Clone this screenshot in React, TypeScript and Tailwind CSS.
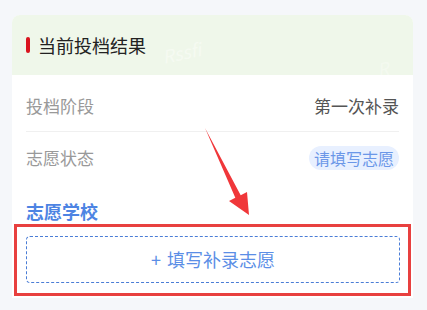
export default function App() {
  return (
    <div
      className="relative w-[427px] h-[310px] overflow-hidden bg-[#f5f7fa] pt-[15px] px-[12px]"
      style={{ fontFamily: '"Noto Sans CJK SC", "Noto Sans", sans-serif' }}
    >
      <div className="w-[401px] h-[283px] bg-white rounded-t-[8px] overflow-hidden">
        {/* header */}
        <div className="relative h-[60px] bg-[#eff7ea] flex items-center px-[14px] gap-[8px]">
          <span className="w-[4px] h-[16px] rounded-[2px] bg-[#d9141e]" />
          <span className="text-[18px] leading-none text-[#222]">当前投档结果</span>
          <span className="absolute left-[150px] top-[24px] text-[18px] italic text-white/40 -rotate-12">Rssfi</span>
          <span className="absolute left-[365px] top-[40px] text-[18px] italic text-white/30 -rotate-12">R</span>
        </div>

        <div className="px-[14px] pt-[5px]">
          <div className="h-[52px] flex items-center justify-between border-b border-[#f0f0f0]">
            <span className="text-[17px] text-[#999]">投档阶段</span>
            <span className="text-[17px] text-[#555]">第一次补录</span>
          </div>
          <div className="h-[52px] flex items-center justify-between">
            <span className="text-[17px] text-[#999]">志愿状态</span>
            <span className="h-[24px] px-[5px] rounded-full bg-[#e8f0ff] text-[16px] leading-[24px] text-[#6b97e8]">
              请填写志愿
            </span>
          </div>
          <div className="h-[40px] flex items-end">
            <span className="text-[18px] leading-[26px] font-bold text-[#4d84e3]">志愿学校</span>
          </div>
        </div>

        <div className="mx-[2px] border-[3px] border-[#e8403f] pl-[9px] pr-[8px] pt-[9px] pb-[10px]">
          <div className="h-[47px] rounded-[4px] border border-dashed border-[#4a7dd6] flex items-center justify-center gap-[6px] text-[18px] text-[#5b8ee6]">
            <span>+</span>
            <span>填写补录志愿</span>
          </div>
        </div>
      </div>

      <svg className="absolute left-0 top-0" width="427" height="310" viewBox="0 0 427 310">
        <polygon
          points="205,128 240.7,195.2 247,192 249,215 229,201 235.3,197.8"
          fill="#f0373a"
        />
      </svg>
    </div>
  );
}
